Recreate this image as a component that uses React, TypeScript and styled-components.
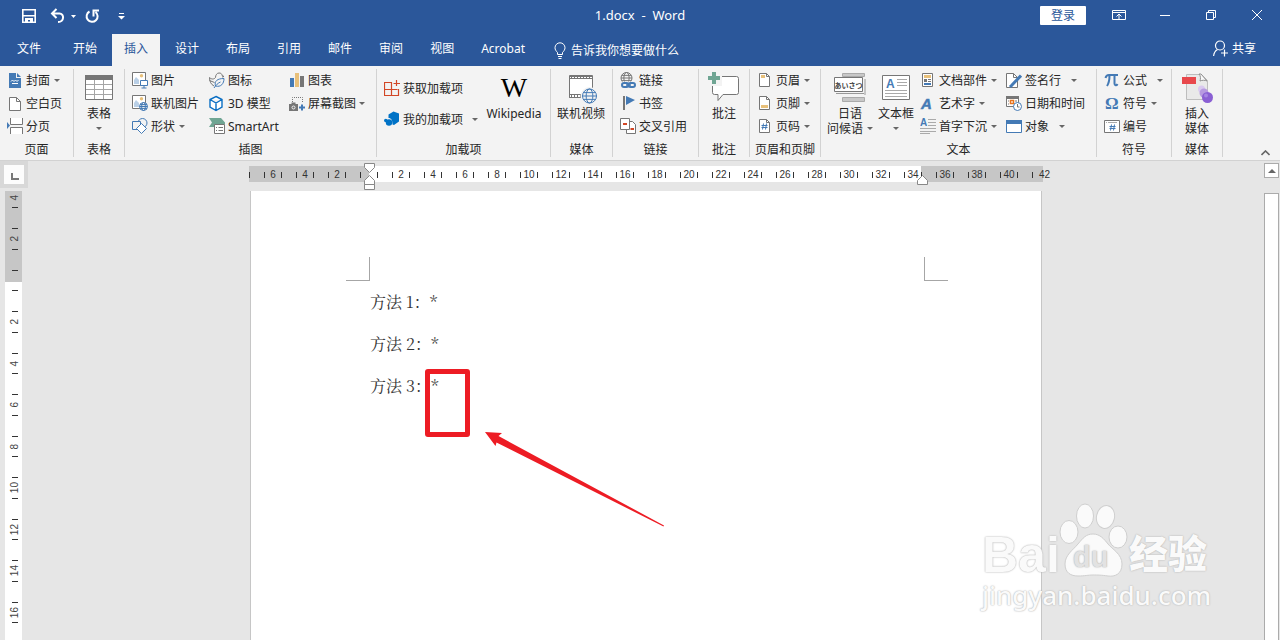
import React from "react";
import styled, { createGlobalStyle, css } from "styled-components";

const c = {
  brand: "#2b579a",
  blue: "#447ab5",
  gray: "#767676",
  gold: "#e8c07a",
  green: "#6fa593",
  orange: "#d24726",
  red: "#ed1c24",
  cloud: "#0b6fc4",
  text: "#262626",
  line: "#d2d2d2",
  canvas: "#e6e6e6",
  margin: "#c6c6c6",
};

const Global = createGlobalStyle`
  * { box-sizing: border-box; }
  html, body { margin: 0; background: ${c.canvas}; }
  body, button, input {
    font-family: "Noto Sans", "Noto Sans CJK SC", sans-serif;
    font-size: 12px;
    line-height: 15px;
    color: ${c.text};
  }
  button { border: 0; padding: 0; background: transparent; white-space: nowrap; }
`;

const Shell = styled.div`
  display: flex;
  flex-direction: column;
  height: 100vh;
  min-height: 320px;
  overflow: hidden;
  position: relative;
`;

/* ---------- header ---------- */
const Header = styled.header`
  flex: none;
  background: ${c.brand};
  color: #fff;
`;
const TitleBar = styled.div`
  display: grid;
  grid-template-columns: 1fr auto 1fr;
  align-items: center;
  height: 30px;
`;
const QuickAccess = styled.div`
  display: flex;
  align-items: center;
  padding: 2px 0 0 21px;
`;
const QuickButton = styled.button<{ $before?: number }>`
  display: flex;
  color: #fff;
  margin-left: ${(p) => p.$before ?? 0}px;
`;
const Title = styled.h1`
  margin: 0;
  font-size: 13px;
  font-weight: 400;
  white-space: pre;
`;
const WindowControls = styled.div`
  display: flex;
  justify-content: flex-end;
  align-items: center;
`;
const SignIn = styled.button`
  width: 46px;
  height: 19px;
  margin-right: 10px;
  background: #fff;
  border-radius: 1px;
  color: ${c.brand};
`;
const WindowButton = styled.button`
  display: flex;
  justify-content: center;
  align-items: center;
  width: 46px;
  height: 30px;
  color: #fff;
`;
const TabBar = styled.nav`
  display: flex;
  gap: 3px;
  height: 36px;
  padding-top: 4px;
`;
const Tab = styled.button<{ $active?: boolean; $file?: boolean }>`
  padding: 0 ${(p) => (p.$file ? 17 : 12)}px 3px;
  background: ${(p) => (p.$active ? "#f3f3f3" : "transparent")};
  color: ${(p) => (p.$active ? c.brand : "#fff")};
`;
const TellMe = styled.label`
  display: flex;
  align-items: center;
  gap: 5px;
  margin-left: 14px;
`;
const TellMeInput = styled.input`
  width: 130px;
  padding: 0;
  border: 0;
  outline: 0;
  background: transparent;
  color: #fff;
  &::placeholder { color: #fff; opacity: 1; }
`;
const Share = styled.button`
  display: flex;
  align-items: center;
  gap: 4px;
  margin-left: auto;
  padding: 0 24px 4px 0;
  color: #fff;
`;

/* ---------- ribbon ---------- */
const RibbonBar = styled.section`
  flex: none;
  display: flex;
  height: 95px;
  padding-top: 3px;
  background: #f3f3f3;
  border-bottom: 1px solid ${c.line};
`;
const GroupBox = styled.section<{ $width: number }>`
  flex: none;
  display: flex;
  flex-direction: column;
  width: ${(p) => p.$width}px;
  height: 88px;
  border-right: 1px solid ${c.line};
`;
const GroupBody = styled.div<{ $pad: number }>`
  flex: 1;
  display: flex;
  padding-left: ${(p) => p.$pad}px;
`;
const GroupLabel = styled.h2`
  margin: 0;
  height: 15px;
  font-size: 12px;
  font-weight: 400;
  text-align: center;
`;
const Stack = styled.div<{ $width?: number; $loose?: boolean }>`
  display: flex;
  flex-direction: column;
  ${(p) => p.$width && css`width: ${p.$width}px;`}
  ${(p) => p.$loose && css`gap: 8px; padding-top: 8px;`}
`;
const CommandButton = styled.button`
  display: flex;
  align-items: center;
  gap: 3px;
  height: 23px;
`;
const BigButton = styled.button<{ $width: number }>`
  display: flex;
  flex-direction: column;
  align-items: center;
  width: ${(p) => p.$width}px;
  height: 70px;
  padding-top: 3px;
`;
const BigIcon = styled.span`
  display: flex;
  height: 34px;
`;
const BigText = styled.span`
  display: flex;
  align-items: center;
  gap: 4px;
  height: 15px;
`;
const Wordmark = styled.span`
  font-family: "Liberation Serif", serif;
  font-size: 28px;
  line-height: 32px;
  color: #000;
`;
const CaretSvg = styled.svg<{ $gap: number }>`
  flex: none;
  margin-left: ${(p) => p.$gap}px;
`;
const Collapse = styled.button`
  align-self: flex-end;
  margin: 0 10px 4px auto;
`;
const Drawing = styled.svg`
  display: block;
  flex: none;
`;

/* ---------- workspace ---------- */
const Workspace = styled.main`
  flex: 1;
  min-height: 0;
  display: grid;
  grid-template-columns: 28px 1fr 16px;
  background: ${c.canvas};
`;
const Side = styled.div`
  display: flex;
  flex-direction: column;
  min-height: 0;
`;
const TabSelector = styled.button`
  flex: none;
  display: flex;
  width: 28px;
  height: 27px;
  background: #fcfcfc;
  border: 4px solid #d8d8d8;
  padding: 8px 0 0 7px;
`;
const VerticalRuler = styled.div`
  flex: 1;
  min-height: 0;
  overflow: hidden;
  width: 17px;
  margin: 3px 0 0 5px;
  background: linear-gradient(${c.margin} 91px, #fff 91px);
`;
const VerticalCell = styled.div<{ $lead?: boolean }>`
  display: flex;
  flex-direction: column;
  align-items: center;
  justify-content: space-between;
  height: 42px;
  padding: 10px 0 10px 2px;
  &:nth-child(odd) { height: 41px; }
  ${(p) => p.$lead && css`&&:first-child { height: 27px; padding-top: 4px; }`}
`;
const VerticalTick = styled.i`
  width: 6px;
  height: 1px;
  background: #333;
`;
const VerticalNumber = styled.span`
  writing-mode: vertical-rl;
  transform: rotate(180deg);
  font: 10px/10px "Liberation Sans", sans-serif;
  color: #444;
`;
const Desk = styled.div`
  display: flex;
  flex-direction: column;
  align-items: center;
  min-height: 0;
  overflow: hidden;
`;
const HorizontalRuler = styled.div`
  flex: none;
  position: relative;
  display: flex;
  width: 794px;
  height: 16px;
  margin: 5px 0 9px;
  background: linear-gradient(90deg, ${c.margin} 120px, #fff 120px, #fff 672px, ${c.margin} 672px);
`;
const RulerCell = styled.div<{ $lead?: boolean }>`
  flex: none;
  display: flex;
  align-items: center;
  justify-content: space-between;
  width: ${(p) => (p.$lead ? 8 : 32)}px;
  padding: 1px ${(p) => (p.$lead ? 0 : 7)}px 0;
`;
const Tick = styled.i`
  width: 1px;
  height: 6px;
  background: #333;
`;
const RulerNumber = styled.span`
  font: 10px/16px "Liberation Sans", sans-serif;
  color: #333;
`;
const Indent = styled.svg<{ $x: number; $y: number }>`
  position: absolute;
  left: ${(p) => p.$x}px;
  top: ${(p) => p.$y}px;
`;
const Paper = styled.article`
  position: relative;
  flex: 1;
  width: 792px;
  padding-top: 66px;
  background: #fff;
  border: solid ${c.margin};
  border-width: 0 1px;
`;
const CropMarks = styled.div`
  display: flex;
  justify-content: space-between;
  height: 24px;
  padding: 0 93px 0 95px;
`;
const CropMark = styled.i<{ $side: "left" | "right" }>`
  width: 24px;
  border-bottom: 1px solid #a6a6a6;
  ${(p) => (p.$side === "left" ? "border-right" : "border-left")}: 1px solid #a6a6a6;
`;
const Line = styled.p`
  margin: 0;
  padding-left: 119px;
  font: 16px/42px "Noto Serif CJK SC", "Liberation Serif", "Noto Sans CJK SC", serif;
  color: #333;
`;
const Highlight = styled.div`
  position: absolute;
  left: 174px;
  top: 178px;
  width: 45px;
  height: 68px;
  border: 5px solid ${c.red};
  border-radius: 3px;
`;
const Arrow = styled.svg`
  position: absolute;
  left: 234px;
  top: 240px;
`;
const Scrollbar = styled.div`
  display: flex;
  flex-direction: column;
  padding: 2px 1px 0 0;
  gap: 15px;
`;
const ScrollUp = styled.button`
  display: flex;
  justify-content: center;
  align-items: center;
  height: 15px;
  background: #fff;
  border: 1px solid #ababab;
`;
const ScrollThumb = styled.div`
  flex: 1;
  background: #fff;
  border: 1px solid #ababab;
  border-bottom: 0;
`;

/* ---------- watermark ---------- */
const Watermark = styled.div`
  position: absolute;
  right: 68px;
  bottom: 28px;
  width: 230px;
  color: #fafafa;
  pointer-events: none;
  text-shadow: 0 0 2px #b4b4b4, 0 0 1px #c4c4c4;
`;
const WatermarkTop = styled.div`
  display: flex;
  align-items: flex-end;
  height: 78px;
  font-weight: 700;
`;
const Bai = styled.span`
  width: 77px;
  font: 700 50px/46px "Liberation Sans", sans-serif;
`;
const Paw = styled.span`
  position: relative;
  width: 70px;
  height: 78px;
`;
const Du = styled.span`
  position: absolute;
  left: 14px;
  top: 41px;
  font: 700 29px/32px "Liberation Sans", sans-serif;
  color: #e2e2e2;
`;
const Experience = styled.span`
  font: 900 39px/54px "Noto Sans CJK SC", sans-serif;
`;
const WatermarkUrl = styled.div`
  font: 500 26px/34px "Noto Sans", sans-serif;
`;

/* ---------- icons ---------- */
type Kids = { children: React.ReactNode };
const Small = ({ children }: Kids) => (
  <Drawing width="16" height="17" viewBox="0 0 16 17" fill="none" stroke={c.gray} aria-hidden>
    {children}
  </Drawing>
);
const Large = ({ children, w = 32 }: Kids & { w?: number }) => (
  <Drawing width={w} height="32" viewBox={`0 0 ${w} 32`} fill="none" stroke={c.gray} aria-hidden>
    {children}
  </Drawing>
);
const Caret = ({ gap = 1 }: { gap?: number }) => (
  <CaretSvg $gap={gap} width="6" height="3" viewBox="0 0 6 3" aria-hidden>
    <path d="M0 0h6L3 3z" fill="#666" />
  </CaretSvg>
);
const Globe = ({ x, y, r, color = c.blue }: { x: number; y: number; r: number; color?: string }) => (
  <g transform={`translate(${x} ${y})`} stroke={color}>
    <circle r={r} fill="#f3f3f3" />
    <ellipse rx={r * 0.48} ry={r} />
    <path d={`M${-r} 0H${r}M${-r * 0.85} ${-r * 0.48}H${r * 0.85}M${-r * 0.85} ${r * 0.48}H${r * 0.85}`} />
  </g>
);

const icons = {
  cover: (
    <Small>
      <path d="M2 1h7v5h5v10H2z" fill={c.blue} stroke="none" />
      <path d="M10 1l4 4h-4z" fill={c.blue} stroke="none" />
      <path d="M4 9.500l1.500-1.500 1.500 1.500 1.500-1.500 1.500 1.500 1.500-1.500M5 11.500h6" stroke="#fff" />
    </Small>
  ),
  blank: <Small><path d="M2.500 2.500h7l4 4v9h-11z" fill="#fff" /><path d="M9.500 2.500v4h4" /></Small>,
  pageBreak: (
    <Small>
      <path d="M3.500 0v6.500h12V0M3.500 16v-6.500h12V16" fill="#fff" />
      <path d="M0 4v7l3-3.500z" fill={c.blue} stroke="none" />
    </Small>
  ),
  table: (
    <Large w={28}>
      <path d="M.5 3.500h27v24H.5z" fill="#fff" />
      <path d="M0 3h28v5H0z" fill={c.gray} stroke="none" />
      <path d="M9.500 8v19M18.500 8v19M1 12.500h26M1 17.500h26M1 22.500h26" stroke="#a5a5a5" />
    </Large>
  ),
  picture: (
    <Small>
      <path d="M.5.500h13v13H.500z" fill="#fff" />
      <circle cx="9.500" cy="3.800" r="1.700" fill={c.gold} stroke="none" />
      <path d="M2 12V8l2-3 3 3v4z" fill="#b9cfe6" stroke="none" />
      <path d="M8.500 8.500h7v5h-7zM12 13v3M9.500 16h5" fill="#fff" stroke={c.blue} />
    </Small>
  ),
  onlinePicture: (
    <Small>
      <path d="M.5.500h13v13H.500z" fill="#fff" />
      <circle cx="9.500" cy="3.800" r="1.700" fill={c.gold} stroke="none" />
      <path d="M2 12V8l2-3 3 3v4z" fill="#b9cfe6" stroke="none" />
      <Globe x={11.5} y={11.5} r={4} />
    </Small>
  ),
  shapes: (
    <Small>
      <circle cx="10.500" cy="5" r="4.500" stroke={c.blue} />
      <path d="M.5 3.500h8v8h-8z" fill="#f3f3f3" stroke={c.blue} />
      <path d="M9.500 5.500l5 5-5 5-5-5z" fill="#fff" stroke={c.blue} />
    </Small>
  ),
  iconSet: (
    <Small>
      <path d="M5 14C2 12.500.5 9.500.5 5.500 2.500 7.500 5 7.500 6.500 5.500 6.500 3 8 1 10 1c2 0 3 1 3 2.500l2 1-2 .5M.500 8.500l5 2" />
      <path d="M6.500 14c-1.500-5 2-7.500 8.500-7.500 0 5-3 9-8.500 7.500zM5 16c2-3 4-5 6.500-6" fill="#f3f3f3" stroke={c.blue} />
    </Small>
  ),
  cube: (
    <Small>
      <path d="M7 1.500l6 3v7.500l-6 3.500-6-3.500V4.500zM1 4.500l6 3.500 6-3.500M7 8v7.500" fill="#fff" stroke={c.cloud} strokeWidth="1.400" />
    </Small>
  ),
  smartArt: (
    <Small>
      <path d="M0 0h12l4 4.500v2H6V9H0l3-4.500z" fill={c.green} stroke="none" />
      <path d="M5.500 6.500h10v9h-10z" fill="#fff" />
      <path d="M7 9.500h1M9.500 9.500h4.500M7 12.500h1M9.500 12.500h4.500" />
    </Small>
  ),
  chart: (
    <Small>
      <path d="M1 6h4v9H1z" fill={c.blue} stroke="none" />
      <path d="M6 1h4v14H6z" fill={c.gold} stroke="none" />
      <path d="M11 4h4v11h-4z" fill={c.gray} stroke="none" />
    </Small>
  ),
  screenshot: (
    <Small>
      <path d="M3.500 7V2.500h10V8" fill="none" strokeDasharray="1 1" />
      <path d="M0 9h2.500V7.500h4V9H9v7H0z" fill={c.gray} stroke="none" />
      <circle cx="4.500" cy="12.500" r="1.500" stroke="#f3f3f3" />
      <path d="M13 9.500v6M10 12.500h6" stroke={c.blue} strokeWidth="2" />
    </Small>
  ),
  store: (
    <Small>
      <path d="M8 2.500H.5v13h14V9M.500 9.500h13M7.500 2.500v13M12.500 0v6M9.500 3.500h6.500" stroke={c.orange} strokeWidth="1.200" />
    </Small>
  ),
  addins: (
    <Small>
      <path d="M9.500.500l5.500 2v8L10 14l-1.500-.5C8.500 9 7 7 4.500 7V3.500z" fill="#0072c6" stroke="none" />
      <circle cx="5" cy="11.500" r="3.200" fill="#0072c6" stroke="none" />
      <circle cx="1.800" cy="9.500" r="1.800" fill="#0072c6" stroke="none" />
    </Small>
  ),
  video: (
    <Large>
      <path d="M4.500 4.500h23v21h-23z" fill="#fff" />
      <path d="M4.500 3.500h23v3h-23zM4.500 22.500h12v3h-12z" />
      <path d="M6 5h21M6 24h10" strokeWidth="2" strokeDasharray="1 2" />
      <circle cx="24.500" cy="24" r="9" fill="#f3f3f3" stroke="none" />
      <Globe x={24.500} y={24} r={7} />
    </Large>
  ),
  link: (
    <Small>
      <Globe x={6.500} y={6} r={5.500} color={c.gray} />
      <path d="M2 9.500h14v7.500H2z" fill="#f3f3f3" stroke="none" />
      <rect x="2" y="11" width="6.500" height="4" rx="2" stroke={c.blue} strokeWidth="2" />
      <rect x="8.500" y="11" width="6.500" height="4" rx="2" stroke={c.blue} strokeWidth="2" />
      <path d="M6 13h5" stroke={c.blue} strokeWidth="1.500" />
    </Small>
  ),
  flag: (
    <Small>
      <path d="M3 1h2v14H3z" fill={c.gray} stroke="none" />
      <path d="M6 1l9 4-9 5z" fill={c.blue} stroke="none" />
    </Small>
  ),
  crossRef: (
    <Small>
      <path d="M6.500 3.500h6l3 3v9h-9z" fill="#fff" />
      <path d="M.5.500h9v11h-9z" fill="#fff" />
      <path d="M3 5h4v2H3zM10.500 10h3.500v2h-3.500z" fill={c.orange} stroke="none" />
    </Small>
  ),
  comment: (
    <Large>
      <path d="M5.500 4.500h23q2 0 2 2v14q0 2-2 2H15l-5 6v-6H6.500q-2 0-2-2V8" fill="#fff" />
      <path d="M0 0h14v14H0z" fill="#f3f3f3" stroke="none" />
      <path d="M4 0h4v4h4v4H8v4H4V8H0V4h4z" fill={c.green} stroke="none" />
    </Large>
  ),
  header: (
    <Small>
      <path d="M2.500 1.500h7l3 3v10h-10z" fill="#fff" /><path d="M9.500 1.500v3h3" />
      <path d="M4 3h4v3H4z" fill={c.gold} stroke="none" />
    </Small>
  ),
  footer: (
    <Small>
      <path d="M2.500 1.500h7l3 3v10h-10z" fill="#fff" /><path d="M9.500 1.500v3h3" />
      <path d="M4 10h7v3H4z" fill={c.gold} stroke="none" />
    </Small>
  ),
  pageNumber: (
    <Small>
      <path d="M2.500 1.500h7l3 3v10h-10z" fill="#fff" /><path d="M9.500 1.500v3h3" />
      <path d="M6.500 5.500l-1 6M9.500 5.500l-1 6M4.500 7.500h6M4.500 9.500h6" stroke={c.blue} />
    </Small>
  ),
  greeting: (
    <Large>
      <path d="M8.500 1.500h22v3h-22z" fill="#c8c8c8" stroke="#aaa" />
      <path d="M31 7v16M2 21.500h28" stroke="#999" />
      <path d="M.500 5.500h28v14H.5z" fill="#fff" />
      <text x="14.500" y="15.500" textAnchor="middle" fontFamily="Noto Sans CJK JP" fontSize="7" fontWeight="700" fill="#444" stroke="none">あいさつ</text>
      <path d="M8.500 25.500h22v4h-22z" fill="#c8c8c8" stroke="#aaa" />
    </Large>
  ),
  textBox: (
    <Large w={28}>
      <path d="M.5 3.500h27v24H.5z" fill="#fff" />
      <text x="4" y="16" fontFamily="Liberation Sans" fontSize="12" fontWeight="700" fill={c.blue} stroke="none">A</text>
      <path d="M15 7.500h10M15 10.500h10M15 13.500h10M3 18.500h22M3 21.500h22M3 24.500h22" stroke="#a9a9a9" />
    </Large>
  ),
  parts: (
    <Small>
      <path d="M2.500 1.500h10v13h-10z" fill="#fff" />
      <path d="M4 3h7v3H4z" fill={c.gold} stroke="none" />
      <path d="M4 7h3v3H4z" fill={c.gray} stroke="none" />
      <path d="M8 7.500h3M8 9.500h3" />
      <path d="M4 11h7v2H4z" fill={c.blue} stroke="none" />
    </Small>
  ),
  wordArt: (
    <Small>
      <text x="1" y="14" fontFamily="Liberation Sans" fontSize="15" fontStyle="italic" fontWeight="700" fill={c.blue} stroke={c.blue} strokeWidth=".5">A</text>
    </Small>
  ),
  dropCap: (
    <Small>
      <text x="0" y="8" fontFamily="Liberation Sans" fontSize="10" fontWeight="700" fill={c.blue} stroke="none">A</text>
      <path d="M8 1.500h8M8 4.500h8M8 7.500h8M0 10.500h16M0 13.500h16M0 15.500h10" stroke="#aaa" />
    </Small>
  ),
  signature: (
    <Small>
      <path d="M.500 1.500h7l4 4v10H.5z" fill="#fff" /><path d="M7.500 1.500v4h4" />
      <path d="M15 3.500L6 13l-2 2" stroke={c.blue} strokeWidth="3" />
    </Small>
  ),
  date: (
    <Small>
      <path d="M.500 1.500h12v10H.500z" fill="#fff" />
      <path d="M0 1h13v3H0z" fill={c.gray} stroke="none" />
      <path d="M2 6h1M2 9h1M9 6h2" />
      <path d="M4.500 5.500h3v3h-3z" stroke="#e8741e" strokeWidth="1.500" />
      <circle cx="11.500" cy="11.500" r="4" fill="#fff" stroke={c.blue} />
      <path d="M11.500 9v3h2" stroke={c.gray} />
    </Small>
  ),
  object: (
    <Small>
      <path d="M.500 2.500h15v12H.500z" fill="#fff" stroke={c.blue} />
      <path d="M0 2h16v4H0z" fill={c.blue} stroke="none" />
    </Small>
  ),
  pi: (
    <Small>
      <path d="M1.500 6C2 3.500 3 3 5 3h9M5.500 3.500C5.500 8 5 11 3 14M10.500 3.500v8c0 2 2 2.500 3 .5" stroke={c.blue} strokeWidth="2" />
    </Small>
  ),
  omega: <Small><text x="1" y="14" fontFamily="Liberation Serif" fontSize="17" fontWeight="700" fill={c.blue} stroke="none">Ω</text></Small>,
  number: (
    <Small>
      <path d="M.500 2.500h15v12H.500z" fill="#fff" />
      <path d="M2 4.500h1M4 4.500h9" stroke="#aaa" />
      <path d="M7.500 6.500l-1 6M10.500 6.500l-1 6M5.500 8.500h6M5.500 10.500h6" stroke={c.blue} />
    </Small>
  ),
  media: (
    <Large>
      <path d="M5.500 2.500h15l6 6v19h-21z" fill="#e9e9e9" stroke="#bdbdbd" />
      <path d="M18 2c2 2 1.500 5 1 7 2-1 5-1 7 0L20 2z" fill="#fafafa" stroke="#8f8f8f" />
      <path d="M1 5h14v7H1z" fill="#e8484c" stroke="none" />
      <circle cx="20.500" cy="17" r="3.500" fill="#d9c9f0" stroke="none" />
      <circle cx="23" cy="21" r="4.500" fill="#b79ae0" stroke="none" />
      <circle cx="26.500" cy="25.500" r="5.500" fill="#8a5fd3" stroke="none" />
      <circle cx="25" cy="23.500" r="2" fill="#a684e2" stroke="none" />
    </Large>
  ),
};
type IconName = keyof typeof icons;

/* ---------- parts ---------- */
const Command = ({ icon, text, caret }: { icon: IconName; text: string; caret?: number }) => (
  <CommandButton type="button">
    {icons[icon]}
    <span>{text}</span>
    {caret !== undefined && <Caret gap={caret} />}
  </CommandButton>
);
const Big = ({ icon, lines, width, caret }: { icon: React.ReactNode; lines: string[]; width: number; caret?: "below" | "inline" }) => (
  <BigButton type="button" $width={width}>
    <BigIcon>{icon}</BigIcon>
    {lines.map((line, i) => (
      <BigText key={line}>
        {line}
        {caret === "inline" && i === lines.length - 1 && <Caret gap={0} />}
      </BigText>
    ))}
    {caret === "below" && <BigText><Caret gap={0} /></BigText>}
  </BigButton>
);
const Group = ({ label, width, pad = 0, children }: Kids & { label: string; width: number; pad?: number }) => (
  <GroupBox $width={width} aria-label={label}>
    <GroupBody $pad={pad}>{children}</GroupBody>
    <GroupLabel>{label}</GroupLabel>
  </GroupBox>
);

const tabs = ["开始", "插入", "设计", "布局", "引用", "邮件", "审阅", "视图", "Acrobat"];
const rulerNumbers = ["6", "4", "2", "", ...Array.from({ length: 21 }, (_, i) => String(i * 2 + 2))];
const verticalNumbers = ["2", "", ...Array.from({ length: 8 }, (_, i) => String(i * 2 + 2))];

export default function App() {
  return (
    <Shell>
      <Global />
      <Header>
        <TitleBar>
          <QuickAccess>
            <QuickButton aria-label="保存">
              <Drawing width="16" height="16" viewBox="0 0 16 16" fill="none" stroke="#fff" strokeWidth="1.600">
                <path d="M1.800 1.800h12.400v12.400H1.800zM2 7.800h12" />
                <path d="M4 10h8v5H9v-3H7v3H4z" fill="#fff" stroke="none" />
              </Drawing>
            </QuickButton>
            <QuickButton aria-label="撤消" $before={13}>
              <Drawing width="16" height="16" viewBox="0 0 16 16" fill="none" stroke="#fff" strokeWidth="2">
                <path d="M2 5.500h7.500c5 0 5 8.500-1.500 8.500M6.500 1L2 5.500 6.500 10" />
              </Drawing>
            </QuickButton>
            <QuickButton aria-label="撤消选项" $before={5}>
              <Drawing width="5" height="3" viewBox="0 0 5 3"><path d="M0 0h5L2.500 3z" fill="#fff" /></Drawing>
            </QuickButton>
            <QuickButton aria-label="重复" $before={9}>
              <Drawing width="15" height="16" viewBox="0 0 15 16" fill="none" stroke="#fff" strokeWidth="2">
                <path d="M4.500 3.500A5.500 5.500 0 1 0 10.500 4M8.500 8.500V2.500H14" />
              </Drawing>
            </QuickButton>
            <QuickButton aria-label="自定义快速访问工具栏" $before={18}>
              <Drawing width="7" height="7" viewBox="0 0 7 7"><path d="M1 0h5v1H1zM0 3h7L3.500 6.500z" fill="#fff" /></Drawing>
            </QuickButton>
          </QuickAccess>
          <Title>{"1.docx  -  Word"}</Title>
          <WindowControls>
            <SignIn type="button">登录</SignIn>
            <WindowButton aria-label="功能区显示选项">
              <Drawing width="14" height="12" viewBox="0 0 14 12" fill="none" stroke="#fff">
                <path d="M.5 1.500h13v9H.5zM.5 3.500h13M7 10V5M4.500 7.500L7 5l2.500 2.500" />
              </Drawing>
            </WindowButton>
            <WindowButton aria-label="最小化">
              <Drawing width="10" height="10" viewBox="0 0 10 10"><path d="M0 5h10v1H0z" fill="#fff" /></Drawing>
            </WindowButton>
            <WindowButton aria-label="还原">
              <Drawing width="10" height="10" viewBox="0 0 10 10" fill="none" stroke="#fff"><path d="M.5 2.500h7v7h-7zM2.500 2V.500h7v7H8" /></Drawing>
            </WindowButton>
            <WindowButton aria-label="关闭">
              <Drawing width="10" height="10" viewBox="0 0 10 10" fill="none" stroke="#fff"><path d="M0 0l10 10M10 0L0 10" /></Drawing>
            </WindowButton>
          </WindowControls>
        </TitleBar>
        <TabBar>
          <Tab $file>文件</Tab>
          {tabs.map((t) => <Tab key={t} $active={t === "插入"}>{t}</Tab>)}
          <TellMe>
            <Drawing width="12" height="17" viewBox="0 0 12 17" fill="none" stroke="#fff" aria-hidden>
              <path d="M3.500 12.500v-2C2 9 1 7.500 1 5.800a5 5 0 0 1 10 0c0 1.700-1 3.200-2.500 4.700v2zM4 14.500h4M4.500 16.500h3" />
            </Drawing>
            <TellMeInput aria-label="告诉我你想要做什么" placeholder="告诉我你想要做什么" />
          </TellMe>
          <Share type="button">
            <Drawing width="15" height="17" viewBox="0 0 15 17" fill="none" stroke="#fff" strokeWidth="1.200" aria-hidden>
              <circle cx="7" cy="5.500" r="4.500" />
              <path d="M.600 16c.4-3.500 1.900-5.500 4-6.500M11.500 9.500v7M8 13h7" />
            </Drawing>
            共享
          </Share>
        </TabBar>
      </Header>

      <RibbonBar>
        <Group label="页面" width={74} pad={7}>
          <Stack>
            <Command icon="cover" text="封面" caret={1} />
            <Command icon="blank" text="空白页" />
            <Command icon="pageBreak" text="分页" />
          </Stack>
        </Group>
        <Group label="表格" width={51}>
          <Big icon={icons.table} lines={["表格"]} width={50} caret="below" />
        </Group>
        <Group label="插图" width={252} pad={7}>
          <Stack $width={77}>
            <Command icon="picture" text="图片" />
            <Command icon="onlinePicture" text="联机图片" />
            <Command icon="shapes" text="形状" caret={1} />
          </Stack>
          <Stack $width={80}>
            <Command icon="iconSet" text="图标" />
            <Command icon="cube" text="3D 模型" />
            <Command icon="smartArt" text="SmartArt" />
          </Stack>
          <Stack>
            <Command icon="chart" text="图表" />
            <Command icon="screenshot" text="屏幕截图" caret={0} />
          </Stack>
        </Group>
        <Group label="加载项" width={174} pad={7}>
          <Stack $width={100} $loose>
            <Command icon="store" text="获取加载项" />
            <Command icon="addins" text="我的加载项" caret={6} />
          </Stack>
          <Big icon={<Wordmark aria-hidden>W</Wordmark>} lines={["Wikipedia"]} width={60} />
        </Group>
        <Group label="媒体" width={62}>
          <Big icon={icons.video} lines={["联机视频"]} width={60} />
        </Group>
        <Group label="链接" width={86} pad={7}>
          <Stack>
            <Command icon="link" text="链接" />
            <Command icon="flag" text="书签" />
            <Command icon="crossRef" text="交叉引用" />
          </Stack>
        </Group>
        <Group label="批注" width={51}>
          <Big icon={icons.comment} lines={["批注"]} width={50} />
        </Group>
        <Group label="页眉和页脚" width={71} pad={7}>
          <Stack>
            <Command icon="header" text="页眉" caret={1} />
            <Command icon="footer" text="页脚" caret={1} />
            <Command icon="pageNumber" text="页码" caret={1} />
          </Stack>
        </Group>
        <Group label="文本" width={276} pad={4}>
          <Big icon={icons.greeting} lines={["日语", "问候语"]} width={50} caret="inline" />
          <Big icon={icons.textBox} lines={["文本框"]} width={42} caret="below" />
          <Stack $width={89}>
            <Indented>
              <Command icon="parts" text="文档部件" caret={1} />
              <Command icon="wordArt" text="艺术字" caret={1} />
              <Command icon="dropCap" text="首字下沉" caret={1} />
            </Indented>
          </Stack>
          <Stack>
            <Command icon="signature" text="签名行" caret={7} />
            <Command icon="date" text="日期和时间" />
            <Command icon="object" text="对象" caret={7} />
          </Stack>
        </Group>
        <Group label="符号" width={75} pad={7}>
          <Stack>
            <Command icon="pi" text="公式" caret={7} />
            <Command icon="omega" text="符号" caret={1} />
            <Command icon="number" text="编号" />
          </Stack>
        </Group>
        <Group label="媒体" width={51}>
          <Big icon={icons.media} lines={["插入", "媒体"]} width={50} />
        </Group>
        <Collapse aria-label="折叠功能区">
          <Drawing width="9" height="6" viewBox="0 0 9 6" fill="none" stroke="#666" strokeWidth="1.600"><path d="M.500 5l4-4 4 4" /></Drawing>
        </Collapse>
      </RibbonBar>

      <Workspace>
        <Side>
          <TabSelector aria-label="制表符">
            <Drawing width="8" height="8" viewBox="0 0 8 8"><path d="M0 0h2v5h6v2H0z" fill="#777" /></Drawing>
          </TabSelector>
          <VerticalRuler>
            <VerticalCell $lead><VerticalNumber>4</VerticalNumber><VerticalTick /></VerticalCell>
            {verticalNumbers.map((n, i) => (
              <VerticalCell key={i}>
                <VerticalTick />
                {n && <VerticalNumber>{n}</VerticalNumber>}
                <VerticalTick />
              </VerticalCell>
            ))}
          </VerticalRuler>
        </Side>
        <Desk>
          <HorizontalRuler>
            <RulerCell $lead><Tick /></RulerCell>
            {rulerNumbers.map((n, i) => (
              <RulerCell key={i}>
                <Tick />
                {n && <RulerNumber>{n}</RulerNumber>}
                {n !== "42" && <Tick />}
              </RulerCell>
            ))}
            <Indent $x={115} $y={-3} width="11" height="27" viewBox="0 0 11 27" fill="#fff" stroke="#888">
              <path d="M.5.500h10v4l-5 5-5-5zM5.500 12.500l5 5v4H.5v-4zM.5 21.500h10v5H.500z" />
            </Indent>
            <Indent $x={668} $y={9} width="11" height="11" viewBox="0 0 11 11" fill="#fff" stroke="#888">
              <path d="M5.500.500l5 5v4H.5v-4z" />
            </Indent>
          </HorizontalRuler>
          <Paper>
            <CropMarks><CropMark $side="left" /><CropMark $side="right" /></CropMarks>
            <Line>方法 1：*</Line>
            <Line>方法 2：*</Line>
            <Line>方法 3：*</Line>
            <Highlight />
            <Arrow width="182" height="98" viewBox="0 0 182 98" aria-hidden>
              <path d="M0 1l17 1-3.500 3L179 94.500l-.5 1L11.500 11.500 10.500 15z" fill={c.red} />
            </Arrow>
          </Paper>
        </Desk>
        <Scrollbar>
          <ScrollUp aria-label="向上滚动">
            <Drawing width="8" height="4" viewBox="0 0 8 4"><path d="M0 4l4-4 4 4z" fill="#666" /></Drawing>
          </ScrollUp>
          <ScrollThumb />
        </Scrollbar>
      </Workspace>

      <Watermark>
        <WatermarkTop>
          <Bai>Bai</Bai>
          <Paw>
            <Drawing width="72" height="78" viewBox="0 0 72 78" fill="#fafafa" stroke="#cfcfcf" aria-hidden>
              <ellipse cx="10" cy="32" rx="9" ry="11.500" />
              <ellipse cx="26" cy="16" rx="8.500" ry="12" />
              <ellipse cx="46.500" cy="17" rx="9" ry="11.500" transform="rotate(12 46.500 17)" />
              <ellipse cx="59" cy="37" rx="9" ry="11" />
              <path d="M34 34c7 0 11 5 15 10s14 10 14 20-7 13-14 12-10-1-15-1-8 1-15 1S6 73 6 64s8-14 13-20 8-10 15-10z" />
            </Drawing>
            <Du>du</Du>
          </Paw>
          <Experience>经验</Experience>
        </WatermarkTop>
        <WatermarkUrl>jingyan.baidu.com</WatermarkUrl>
      </Watermark>
    </Shell>
  );
}

const Indented = styled.div`
  display: flex;
  flex-direction: column;
  padding-left: 3px;
`;
